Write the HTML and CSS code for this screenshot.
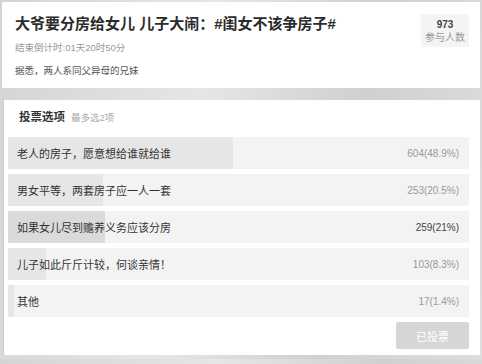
FILE: index.html
```html
<!DOCTYPE html>
<html lang="zh-CN">
<head>
    <meta charset="UTF-8">
    <meta name="viewport" content="width=device-width, initial-scale=1.0">
    <title>投票</title>
    <link rel="stylesheet" href="styles.css">
</head>
<body>
    <div class="topic-card">
        <div class="topic-info">
            <h2>大爷要分房给女儿 儿子大闹：#闺女不该争房子#</h2>
            <div class="countdown">结束倒计时:01天20时50分</div>
            <div class="desc">据悉，两人系同父异母的兄妹</div>
        </div>
        <div class="stat-box">
            <div class="stat-num">973</div>
            <div class="stat-label">参与人数</div>
        </div>
    </div>

    <div class="vote-card">
        <div class="vote-head">
            <span class="vote-title">投票选项</span>
            <span class="vote-limit">最多选2项</span>
        </div>
        <div class="option">
            <div class="option-fill" style="width: 48.9%"></div>
            <span class="option-text">老人的房子，愿意想给谁就给谁</span>
            <span class="option-count">604(48.9%)</span>
        </div>
        <div class="option">
            <div class="option-fill" style="width: 20.5%"></div>
            <span class="option-text">男女平等，两套房子应一人一套</span>
            <span class="option-count">253(20.5%)</span>
        </div>
        <div class="option selected">
            <div class="option-fill" style="width: 21%"></div>
            <span class="option-text">如果女儿尽到赡养义务应该分房</span>
            <span class="option-count">259(21%)</span>
        </div>
        <div class="option">
            <div class="option-fill" style="width: 8.3%"></div>
            <span class="option-text">儿子如此斤斤计较，何谈亲情！</span>
            <span class="option-count">103(8.3%)</span>
        </div>
        <div class="option">
            <div class="option-fill" style="width: 1.4%"></div>
            <span class="option-text">其他</span>
            <span class="option-count">17(1.4%)</span>
        </div>
        <div class="vote-foot">
            <button class="voted-btn">已投票</button>
        </div>
    </div>
</body>
</html>
```

FILE: styles.css
```css
body {
    font-family: "Liberation Sans", "Noto Sans CJK SC", sans-serif;
    background: linear-gradient(100deg, #d4d4d4 0%, #e6e6e6 40%, #d0d0d0 70%, #dedede 100%);
    margin: 0;
    padding: 2px 2px 4px 2px;
    color: #333;
}

.topic-card {
    background-color: #fff;
    height: 86px;
    display: flex;
    justify-content: space-between;
    box-sizing: border-box;
    padding: 0 11px 0 13px;
}

.topic-info h2 {
    font-size: 15px;
    font-weight: bold;
    line-height: 20px;
    height: 20px;
    margin: 12px 0 0 0;
    color: #2b2b2b;
}

.countdown {
    font-size: 9.5px;
    color: #999;
    line-height: 14px;
    height: 14px;
    margin-top: 7px;
}

.desc {
    font-size: 9.5px;
    color: #555;
    line-height: 14px;
    height: 14px;
    margin-top: 9px;
}

.stat-box {
    background-color: #f4f4f4;
    width: 48px;
    height: 33px;
    margin-top: 12px;
    text-align: center;
    font-size: 10px;
    line-height: 13px;
    padding-top: 4px;
    box-sizing: border-box;
}

.stat-num {
    font-weight: bold;
    color: #444;
    height: 13px;
}

.stat-label {
    color: #999;
    height: 13px;
}

.vote-card {
    background-color: #fff;
    margin: 12px 0 0 1px;
    padding: 8px 11px 6px 4px;
    border-left: 1px solid #ccc;
}

.vote-head {
    display: flex;
    align-items: baseline;
    height: 18px;
    line-height: 18px;
    padding-left: 11px;
    margin-bottom: 11px;
}

.vote-title {
    font-size: 11.5px;
    font-weight: bold;
    color: #333;
}

.vote-limit {
    font-size: 9.5px;
    color: #aaa;
    margin-left: 6px;
}

.option {
    position: relative;
    background-color: #f3f3f3;
    height: 32px;
    margin-bottom: 5px;
    display: flex;
    align-items: center;
    justify-content: space-between;
    padding: 0 10px 0 9px;
}

.option-fill {
    position: absolute;
    left: 0;
    top: 0;
    bottom: 0;
    background-color: #e6e6e6;
}

.selected .option-fill {
    background-color: #dadada;
}

.option-text, .option-count {
    position: relative;
}

.option-text {
    font-size: 11px;
    color: #333;
}

.option-count {
    font-size: 10px;
    color: #999;
}

.selected .option-count {
    color: #444;
}

.vote-foot {
    display: flex;
    justify-content: flex-end;
    margin-top: 5px;
}

.voted-btn {
    font-family: inherit;
    width: 73px;
    height: 27px;
    background-color: #d6d6d6;
    color: #fff;
    border: none;
    border-radius: 2px;
    font-size: 11px;
}
```
